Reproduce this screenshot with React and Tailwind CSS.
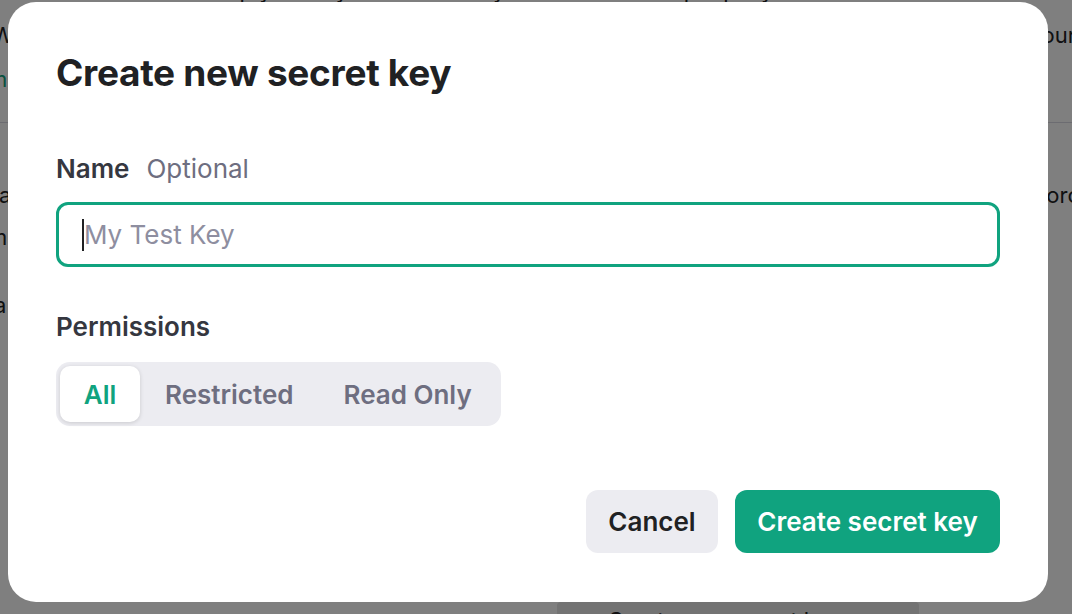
import React from 'react';

export default function App() {
  return (
    <div className="relative h-[614px] w-[1072px] overflow-hidden bg-white font-['Inter',sans-serif] text-[#202123]">
      {/* page behind the modal */}
      <div className="flex h-full flex-col">
        <div className="-mt-[25px] h-[30px] pl-[200px] text-[22px] leading-[30px]">
          Keep your keys safe and only share them with people you trust
        </div>
        <div className="flex h-[118px] flex-col border-b border-[#d9d9e3]">
          <div className="mt-[15px] flex justify-between text-[22px] leading-[30px]">
            <span className="-ml-[8px]">We</span>
            <span className="-mr-[4px]">your</span>
          </div>
          <div className="mt-[14px] text-[22px] leading-[30px] text-[#10a37f]">
            <span className="-ml-[12px]">m</span>
          </div>
        </div>
        <div className="flex justify-between pt-[56px] text-[22px] leading-[32px]">
          <span className="-ml-[14px]">na</span>
          <span className="-mr-[8px]">orc</span>
        </div>
        <div className="pt-[10px] text-[22px] leading-[32px]">
          <span className="-ml-[12px]">m</span>
        </div>
        <div className="pt-[36px] text-[22px] leading-[32px]">
          <span className="-ml-[6px]">a</span>
        </div>
        <div className="mt-auto flex pl-[557px]">
          <div className="flex h-[12px] w-[362px] items-start rounded-t-[4px] bg-[#e6e6e6] pl-[30px] pt-[6px] text-[22px] leading-[24px]">
            + Create new secret key
          </div>
        </div>
      </div>

      {/* overlay + modal */}
      <div className="absolute inset-0 bg-black/50 pl-[8px] pt-[2px]">
        <div className="flex h-[600px] w-[1040px] flex-col rounded-[28px] bg-white px-[48px] pt-[49px]">
          <h2 className="text-[37px] font-bold leading-[44px] tracking-[-0.3px] text-[#202123]">
            Create new secret key
          </h2>

          <div className="mt-[58px] flex items-baseline gap-[17px] text-[26px] leading-[32px]">
            <span className="font-semibold text-[#353740]">Name</span>
            <span className="text-[#6e6e80]">Optional</span>
          </div>
          <div className="mt-[17px] flex h-[65px] items-center rounded-[12px] border-[3px] border-[#10a37f] pl-[23px]">
            <span className="h-[32px] w-[2px] bg-[#202123]" />
            <span className="text-[26px] text-[#8e8ea0]">My Test Key</span>
          </div>

          <div className="mt-[44px] text-[26px] font-semibold leading-[32px] text-[#353740]">
            Permissions
          </div>
          <div className="mt-[19px] flex h-[64px] w-fit items-center whitespace-nowrap rounded-[14px] bg-[#ececf1] p-[4px] text-[26px] font-semibold">
            <div className="flex h-[56px] w-[80px] items-center justify-center rounded-[10px] bg-white text-[#10a37f] shadow-[0_1px_4px_rgba(0,0,0,0.15)]">
              All
            </div>
            <div className="flex h-[56px] items-center px-[25px] text-[#6e6e80]">Restricted</div>
            <div className="flex h-[56px] items-center px-[25px] text-[#6e6e80]">Read Only</div>
          </div>

          <div className="mt-[64px] flex justify-end gap-[17px] text-[26px] font-semibold">
            <button className="h-[63px] w-[132px] rounded-[12px] bg-[#ececf1] text-[#202123]">Cancel</button>
            <button className="h-[63px] w-[265px] rounded-[12px] bg-[#10a37f] text-white">Create secret key</button>
          </div>
        </div>
      </div>
    </div>
  );
}
